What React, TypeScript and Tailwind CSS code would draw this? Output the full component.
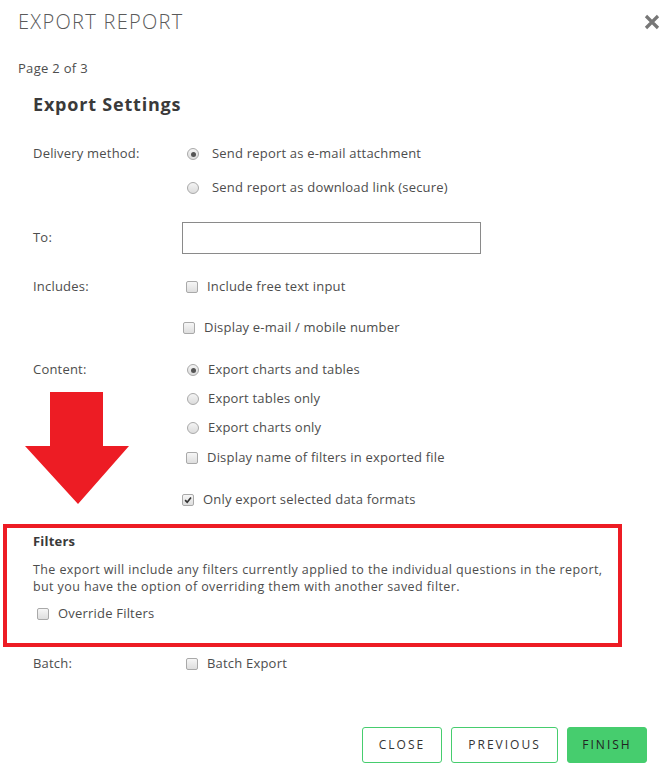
import React from 'react'

const font = { fontFamily: '"Open Sans", "Liberation Sans", sans-serif' }

function Radio({ checked }: { checked?: boolean }) {
  return (
    <span className="flex h-[12px] w-[12px] shrink-0 items-center justify-center rounded-full border border-[#a9a9a9] bg-gradient-to-b from-[#f4f4f4] to-[#dcdcdc]">
      {checked && <span className="h-[5px] w-[5px] rounded-full bg-[#555]" />}
    </span>
  )
}

function Checkbox({ checked }: { checked?: boolean }) {
  return (
    <span className="flex h-[12px] w-[12px] shrink-0 items-center justify-center rounded-[2px] border border-[#a9a9a9] bg-gradient-to-b from-[#f6f6f6] to-[#dedede]">
      {checked && (
        <svg viewBox="0 0 12 12" className="h-[10px] w-[10px]">
          <path d="M2.5 6.2 L5 8.6 L9.6 3" fill="none" stroke="#333" strokeWidth="2" />
        </svg>
      )}
    </span>
  )
}

function Row({ label, children, className = '' }: { label?: string; children: React.ReactNode; className?: string }) {
  return (
    <div className={`flex h-[20px] items-center ${className}`}>
      <div className="w-[149px] shrink-0 text-[13px] tracking-[0.2px] text-[#4d4d4d]">{label}</div>
      {children}
    </div>
  )
}

function Option({ text, control, pad, gap }: { text: string; control: React.ReactNode; pad: string; gap: string }) {
  return (
    <div className={`flex items-center ${pad} ${gap} text-[13px] tracking-[0.2px] text-[#4d4d4d]`}>
      {control}
      <span>{text}</span>
    </div>
  )
}

export default function App() {
  return (
    <div className="relative min-h-[779px] w-[669px] bg-white" style={font}>
      {/* header */}
      <div className="flex h-[44px] items-center justify-between pl-[18px] pr-[9px]">
        <h1 className="text-[20px] font-light tracking-[1.3px] text-[#5a5a5a]">EXPORT REPORT</h1>
        <svg viewBox="0 0 16 16" className="h-[16px] w-[16px]">
          <path d="M2 2 L14 14 M14 2 L2 14" stroke="#777" strokeWidth="3.2" />
        </svg>
      </div>
      <div className="mt-[15px] flex h-[20px] items-center pl-[18px] text-[13px] tracking-[0.3px] text-[#4d4d4d]">Page 2 of 3</div>

      <div className="pl-[33px]">
        <h2 className="mt-[13px] flex h-[24px] items-center text-[18px] font-bold tracking-[0.8px] text-[#3a3a3a]">Export Settings</h2>

        <Row label="Delivery method:" className="mt-[28px]">
          <Option pad="pl-[5px]" gap="gap-[13px]" control={<Radio checked />} text="Send report as e-mail attachment" />
        </Row>
        <Row className="mt-[14px]">
          <Option pad="pl-[5px]" gap="gap-[13px]" control={<Radio />} text="Send report as download link (secure)" />
        </Row>

        <div className="mt-[24px] flex h-[32px] items-center">
          <div className="w-[149px] shrink-0 text-[13px] tracking-[0.2px] text-[#4d4d4d]">To:</div>
          <input className="h-[32px] w-[299px] border border-[#8a8a8a] bg-white outline-none" />
        </div>

        <Row label="Includes:" className="mt-[23px]">
          <Option pad="pl-[4px]" gap="gap-[9px]" control={<Checkbox />} text="Include free text input" />
        </Row>
        <Row className="mt-[21px]">
          <Option pad="pl-[1px]" gap="gap-[9px]" control={<Checkbox />} text="Display e-mail / mobile number" />
        </Row>

        <Row label="Content:" className="mt-[22px]">
          <Option pad="pl-[5px]" gap="gap-[9px]" control={<Radio checked />} text="Export charts and tables" />
        </Row>
        <Row className="mt-[9px]">
          <Option pad="pl-[5px]" gap="gap-[9px]" control={<Radio />} text="Export tables only" />
        </Row>
        <Row className="mt-[9px]">
          <Option pad="pl-[5px]" gap="gap-[9px]" control={<Radio />} text="Export charts only" />
        </Row>
        <Row className="mt-[10px]">
          <Option pad="pl-[4px]" gap="gap-[9px]" control={<Checkbox />} text="Display name of filters in exported file" />
        </Row>
        <Row className="mt-[22px]">
          <Option pad="pl-[0px]" gap="gap-[9px]" control={<Checkbox checked />} text="Only export selected data formats" />
        </Row>
      </div>

      {/* filters, outlined in red */}
      <div className="ml-[3px] mt-[14px] w-[619px] border-4 border-[#ed1c24] pb-[19px] pl-[26px] pt-[4px]">
        <h3 className="flex h-[20px] items-center text-[13px] font-bold tracking-[0.2px] text-[#3a3a3a]">Filters</h3>
        <p className="mt-[9px] text-[12.5px] leading-[17px] tracking-[0.4px] text-[#4d4d4d]">
          <span className="block">The export will include any filters currently applied to the individual questions in the report,</span>
          <span className="block">but you have the option of overriding them with another saved filter.</span>
        </p>
        <div className="mt-[9px] flex h-[20px] items-center gap-[9px] pl-[4px] text-[13px] tracking-[0.2px] text-[#4d4d4d]">
          <Checkbox />
          <span>Override Filters</span>
        </div>
      </div>

      <div className="pl-[33px]">
        <Row label="Batch:" className="mt-[7px]">
          <Option pad="pl-[4px]" gap="gap-[9px]" control={<Checkbox />} text="Batch Export" />
        </Row>
      </div>

      <div className="mt-[53px] flex justify-end gap-[9px] pr-[22px]">
        <button className="h-[36px] w-[80px] rounded-[3px] border border-[#46cd6e] bg-white text-[12px] tracking-[2px] text-[#333]">CLOSE</button>
        <button className="h-[36px] w-[107px] rounded-[3px] border border-[#46cd6e] bg-white text-[12px] tracking-[2px] text-[#333]">PREVIOUS</button>
        <button className="h-[36px] w-[80px] rounded-[3px] border border-[#46cd6e] bg-[#46cd6e] text-[12px] tracking-[2px] text-[#222]">FINISH</button>
      </div>

      {/* annotation arrow */}
      <svg viewBox="0 0 104 112" className="absolute left-[25px] top-[392px] h-[112px] w-[104px]">
        <polygon points="25,0 78,0 78,54 104,54 53,112 0,54 25,54" fill="#ed1c24" />
      </svg>
    </div>
  )
}
